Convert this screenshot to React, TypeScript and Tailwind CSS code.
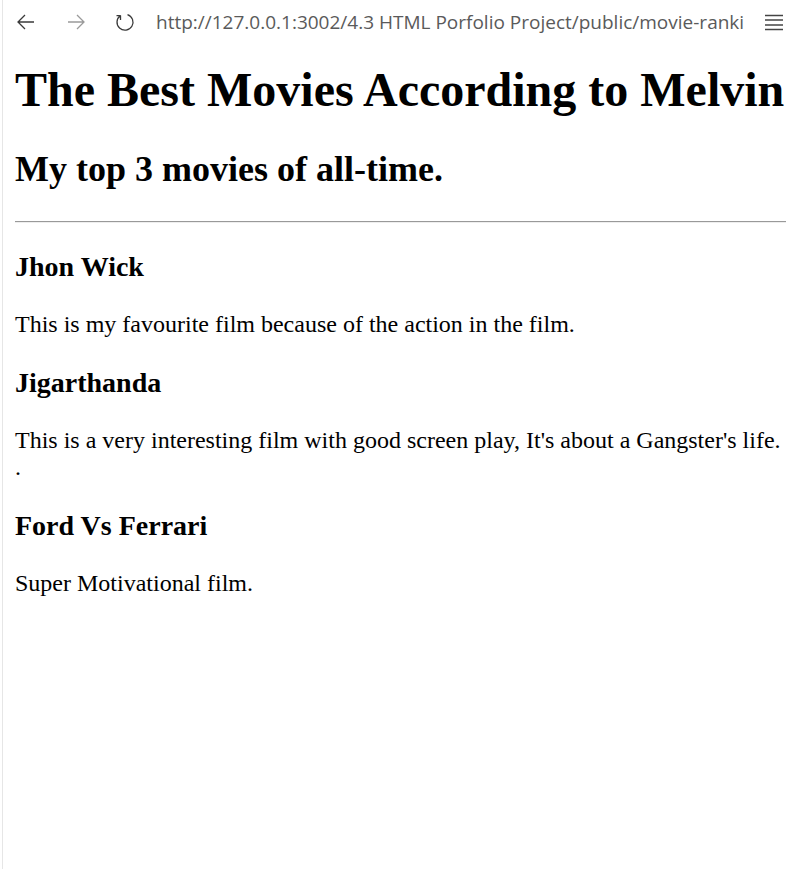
const movies = [
  { title: 'Jhon Wick', lines: ['This is my favourite film because of the action in the film.'] },
  {
    title: 'Jigarthanda',
    lines: ["This is a very interesting film with good screen play, It's about a Gangster's life.", '.'],
  },
  { title: 'Ford Vs Ferrari', lines: ['Super Motivational film.'] },
];

const BackIcon = ({ color }: { color: string }) => (
  <svg width="20" height="20" viewBox="0 0 20 20" fill="none" stroke={color} strokeWidth="1.3">
    <path d="M18 10H2M9 3l-7 7 7 7" />
  </svg>
);

const ForwardIcon = ({ color }: { color: string }) => (
  <svg width="20" height="20" viewBox="0 0 20 20" fill="none" stroke={color} strokeWidth="1.3">
    <path d="M2 10h16M11 3l7 7-7 7" />
  </svg>
);

const ReloadIcon = () => (
  <svg width="20" height="20" viewBox="0 0 20 20" fill="none" stroke="#3a3a3a" strokeWidth="1.3">
    <path d="M12.5 2.6A8 8 0 1 1 5.5 3.6" />
    <path d="M5.5 3.6V8M5.5 3.6H1.5" />
  </svg>
);

const MenuIcon = () => (
  <svg width="20" height="20" viewBox="0 0 20 20" fill="none" stroke="#444" strokeWidth="1.3">
    <path d="M1 3.5h18M1 8h18M1 13h18M1 17.5h18" />
  </svg>
);

const Toolbar = () => (
  <div className="flex h-[44px] items-center">
    <div className="ml-[13px] flex w-[20px] justify-center">
      <BackIcon color="#3a3a3a" />
    </div>
    <div className="ml-[30px] flex w-[20px] justify-center">
      <ForwardIcon color="#9a9a9a" />
    </div>
    <div className="ml-[29px] flex w-[20px] justify-center">
      <ReloadIcon />
    </div>
    <div className="ml-[21px] flex-1 overflow-hidden whitespace-nowrap font-['Open_Sans',sans-serif] text-[19px] text-[#5a5a5a]">
      http://127.0.0.1:3002/4.3 HTML Porfolio Project/public/movie-ranki
    </div>
    <div className="mr-[14px] ml-[12px]">
      <MenuIcon />
    </div>
  </div>
);

export default function App() {
  return (
    <div className="min-h-[869px] bg-white pl-[2px]">
      <div className="min-h-[869px] border-l border-[#e6e6e6]">
        <Toolbar />
        <div className="px-[12px] font-['Liberation_Serif',serif] text-black">
          <h1 className="mt-[18px] text-[48px] leading-[55px] font-bold">The Best Movies According to Melvin</h1>
          <h2 className="mt-[32px] text-[36px] leading-[41px] font-bold">My top 3 movies of all-time.</h2>
          <div className="mt-[31px] border-t border-b border-t-[#999] border-b-[#eee]" />
          {movies.map((movie) => (
            <div key={movie.title}>
              <h3 className="mt-[28px] text-[28px] leading-[32px] font-bold">{movie.title}</h3>
              <p className="mt-[28px] text-[24px] leading-[27.6px]">
                {movie.lines.map((line, i) => (
                  <span key={i}>
                    {i > 0 && <br />}
                    {line}
                  </span>
                ))}
              </p>
            </div>
          ))}
        </div>
      </div>
    </div>
  );
}
